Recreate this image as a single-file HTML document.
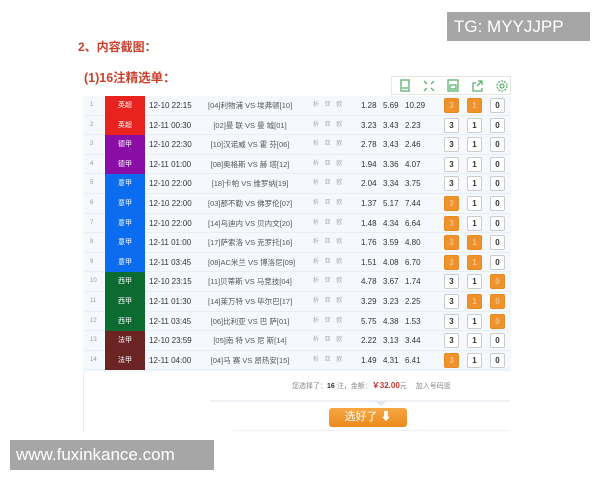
<!DOCTYPE html><html><head><meta charset="utf-8"><style>
*{margin:0;padding:0;box-sizing:border-box}
body{width:600px;height:480px;background:#fff;position:relative;overflow:hidden;font-family:"Liberation Sans","Noto Sans CJK SC",sans-serif}
.a{position:absolute}
.h{color:#c8412f;font-weight:bold;font-family:"Liberation Sans","Noto Sans CJK SC",sans-serif}
.row{position:absolute;left:84px;width:426px;height:19.5px;background:#f5f9fd;border-bottom:1px solid #e8eef5;font-size:8px;color:#333}
.row span{position:absolute;top:0;line-height:19px;white-space:nowrap}
.lg{left:21px;width:40px;height:19.5px;color:#fff;text-align:center;font-size:7px}
.b{position:absolute;top:2px;width:15px;height:15px;border:1px solid #ccc;background:#fff;border-radius:2px;font-size:8px;font-weight:bold;text-align:center;line-height:13px;color:#333}
.o{background:#f0922c;border-color:#e88a22;color:#f8c080}
.wm{background:#a6a6a6;color:#fff;font-family:"Liberation Sans",sans-serif}
</style></head><body>
<div class="a wm" style="left:447px;top:12px;width:143px;height:29px;font-size:17px;line-height:29px;padding-left:7px">TG: MYYJJPP</div>
<div class="a h" style="left:78px;top:38px;font-size:12px">2、内容截图：</div>
<div class="a h" style="left:84px;top:67px;font-size:12.5px">(1)16注精选单：</div>
<div class="a" style="left:391px;top:76px;width:120px;height:19px;border:1px solid #e3e8e3;background:#fff"></div>
<div class="a" style="left:396px;top:79px;font-size:11px;color:#5cb85c;letter-spacing:0">
<svg width="115" height="14" viewBox="0 0 115 14" fill="none" stroke="#5cb070" stroke-width="1.3">
<rect x="5" y="1" width="8" height="11"/><line x1="6" y1="9" x2="12" y2="9"/>
<path d="M28 2l3 3M38 2l-3 3M28 12l3-3M38 12l-3-3"/>
<rect x="52" y="1" width="10" height="11"/><rect x="54" y="6" width="6" height="4"/>
<path d="M80 4h-3v8h9v-3M82 2h4v4M86 2l-5 5"/>
<circle cx="106" cy="7" r="2"/><circle cx="106" cy="7" r="5" stroke-dasharray="2 1.2"/>
</svg></div>
<div class="a" style="left:83px;top:96px;width:428px;height:276px;background:#f5f9fd"></div>
<div id="rows"></div>
<div class="a" style="left:292px;top:380px;font-size:7px;color:#888;white-space:nowrap">您选择了：<b style="color:#333">16</b> 注，金额：<b style="color:#c0392b;font-size:8px">￥32.00</b>元　 加入号码篮</div>
<div class="a" style="left:83px;top:372px;width:1px;height:60px;background:#eee"></div>
<div class="a" style="left:210px;top:400px;width:300px;height:2px;background:#eef2f6"></div>
<div class="a" style="left:375px;top:401px;width:0;height:0;border-left:6px solid transparent;border-right:6px solid transparent;border-top:5px solid #e4e8ec"></div>
<div class="a" style="left:233px;top:430px;width:277px;height:1px;background:#eef2f6"></div>
<div class="a" style="left:329px;top:408px;width:78px;height:19px;background:linear-gradient(#f7a843,#eb8a1c);border-radius:3px;color:#fff;font-size:11px;text-align:center;line-height:19px">选好了 ⬇</div>
<div class="a wm" style="left:10px;top:440px;width:204px;height:30px;font-size:17px;line-height:30px;padding-left:6px">www.fuxinkance.com</div>
<script>
var d=[["英超","#e8231e","12-10 22:15","[04]利物浦 VS 埃弗顿[10]","1.28","5.69","10.29","110"],
["英超","#e8231e","12-11 00:30","[02]曼 联 VS 曼 城[01]","3.23","3.43","2.23","000"],
["德甲","#8a0ea6","12-10 22:30","[10]汉诺威 VS 霍 芬[06]","2.78","3.43","2.46","000"],
["德甲","#8a0ea6","12-11 01:00","[08]奥格斯 VS 赫 塔[12]","1.94","3.36","4.07","000"],
["意甲","#0c6cf0","12-10 22:00","[18]卡帕 VS 维罗纳[19]","2.04","3.34","3.75","000"],
["意甲","#0c6cf0","12-10 22:00","[03]那不勒 VS 佛罗伦[07]","1.37","5.17","7.44","100"],
["意甲","#0c6cf0","12-10 22:00","[14]乌迪内 VS 贝内文[20]","1.48","4.34","6.64","100"],
["意甲","#0c6cf0","12-11 01:00","[17]萨索洛 VS 克罗托[16]","1.76","3.59","4.80","110"],
["意甲","#0c6cf0","12-11 03:45","[08]AC米兰 VS 博洛尼[09]","1.51","4.08","6.70","110"],
["西甲","#0b6b30","12-10 23:15","[11]贝蒂斯 VS 马竞技[04]","4.78","3.67","1.74","001"],
["西甲","#0b6b30","12-11 01:30","[14]莱万特 VS 毕尔巴[17]","3.29","3.23","2.25","011"],
["西甲","#0b6b30","12-11 03:45","[06]比利亚 VS 巴 萨[01]","5.75","4.38","1.53","001"],
["法甲","#6b2424","12-10 23:59","[05]南 特 VS 尼 斯[14]","2.22","3.13","3.44","000"],
["法甲","#6b2424","12-11 04:00","[04]马 赛 VS 昂热安[15]","1.49","4.31","6.41","100"]];
var h="";d.forEach(function(r,i){var t=96+i*19.6;
h+='<div class="row" style="top:'+t+'px"><span style="left:6px;color:#999;font-size:6px">'+(i+1)+'</span>'+
'<span class="lg" style="background:'+r[1]+'">'+r[0]+'</span>'+
'<span style="left:65px">'+r[2]+'</span>'+
'<span style="left:124px;width:84px;text-align:center;color:#555;font-size:7.5px">'+r[3]+'</span>'+
'<span style="left:229px;color:#aaa;font-size:6px;letter-spacing:2px">析 亚 欧</span>'+
'<span style="left:277px">'+r[4]+'</span><span style="left:299px">'+r[5]+'</span><span style="left:321px">'+r[6]+'</span>';
["3","1","0"].forEach(function(v,k){h+='<div class="b'+(r[7][k]=="1"?" o":"")+'" style="left:'+(360+k*23)+'px">'+v+'</div>';});
h+='</div>';});
document.getElementById("rows").innerHTML=h;
</script>
</body></html>
